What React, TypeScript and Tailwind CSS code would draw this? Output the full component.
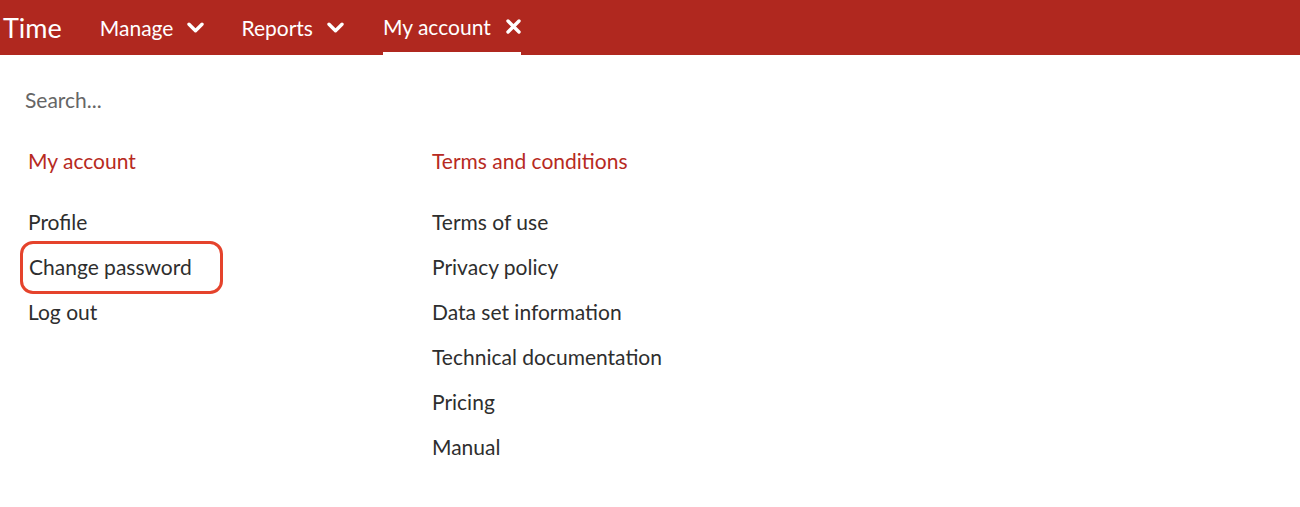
const accountLinks = ["Profile", "Change password", "Log out"];
const termsLinks = [
  "Terms of use",
  "Privacy policy",
  "Data set information",
  "Technical documentation",
  "Pricing",
  "Manual",
];

function Chevron() {
  return (
    <svg width="17" height="11" viewBox="0 0 17 11" fill="none" stroke="currentColor" strokeWidth="3.4" strokeLinecap="round" strokeLinejoin="round">
      <path d="M2 2.2 L8.5 8.7 L15 2.2" />
    </svg>
  );
}

function Close() {
  return (
    <svg width="15" height="15" viewBox="0 0 15 15" fill="none" stroke="currentColor" strokeWidth="3.4" strokeLinecap="round">
      <path d="M2 2 L13 13 M13 2 L2 13" />
    </svg>
  );
}

export default function App() {
  return (
    <div className="min-h-[507px] bg-white font-['Lato',sans-serif] text-[#2e2e2e]">
      {/* Top bar */}
      <header className="h-[55px] bg-[#b0281f] flex items-stretch text-white">
        <span className="pl-[3px] pr-[38px] text-[27px] flex items-center leading-none">Time</span>
        <nav className="flex items-stretch">
          <div className="flex items-center gap-[14px] pr-[37px] text-[21px]">
            Manage
            <Chevron />
          </div>
          <div className="flex items-center gap-[14px] pr-[39px] text-[21px]">
            Reports
            <Chevron />
          </div>
          <div className="flex items-center gap-[15px] text-[21px] border-b-[3px] border-white pt-[1px]">
            My account
            <Close />
          </div>
        </nav>
      </header>

      {/* Menu panel */}
      <div className="pl-[25px] pt-[29px]">
        <input
          className="text-[21px] text-[#555] placeholder:text-[#666] outline-none w-[300px]"
          placeholder="Search..."
        />
      </div>

      <div className="flex pl-[28px] pt-[32px]">
        <div className="w-[404px]">
          <h3 className="text-[21px] text-[#b72a22] leading-[26px]">My account</h3>
          <ul className="mt-[26px] flex flex-col">
            {accountLinks.map((l) => (
              <li key={l} className="h-[45px] flex items-center text-[21px]">
                {l === "Change password" ? (
                  <span className="-ml-[8px] pl-[6px] pr-[28px] h-[53px] flex items-center rounded-[13px] border-[3px] border-[#e5432c]">
                    {l}
                  </span>
                ) : (
                  l
                )}
              </li>
            ))}
          </ul>
        </div>
        <div>
          <h3 className="text-[21px] text-[#b72a22] leading-[26px]">Terms and conditions</h3>
          <ul className="mt-[26px] flex flex-col">
            {termsLinks.map((l) => (
              <li key={l} className="h-[45px] flex items-center text-[21px]">
                {l}
              </li>
            ))}
          </ul>
        </div>
      </div>
    </div>
  );
}
